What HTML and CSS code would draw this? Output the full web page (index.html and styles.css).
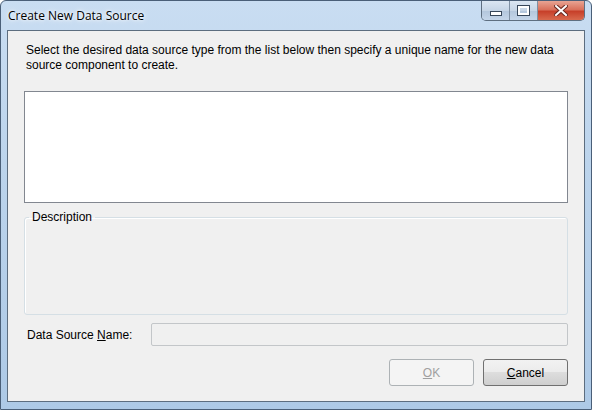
FILE: index.html
```html
<!DOCTYPE html>
<html lang="en">
<head>
    <meta charset="UTF-8">
    <meta name="viewport" content="width=device-width, initial-scale=1.0">
    <title>Create New Data Source</title>
    <link rel="stylesheet" href="styles.css">
</head>
<body>
    <div class="window">
        <div class="titlebar">
            <span class="title">Create New Data Source</span>
            <div class="caption">
                <div class="cap min"><span class="min_icon"></span></div>
                <div class="cap max"><span class="max_icon"></span></div>
                <div class="cap close">
                    <svg width="14" height="11" viewBox="0 0 14 11">
                        <path d="M2 1 L12 10 M12 1 L2 10" stroke="#6b2a22" stroke-width="4" stroke-linecap="square"/>
                        <path d="M2 1 L12 10 M12 1 L2 10" stroke="#ffffff" stroke-width="2" stroke-linecap="square"/>
                    </svg>
                </div>
            </div>
        </div>
        <div class="client">
            <p class="intro">Select the desired data source type from the list below then specify a unique name for the new data source component to create.</p>
            <div class="listbox"></div>
            <fieldset class="group">
                <legend>Description</legend>
            </fieldset>
            <div class="name_row">
                <label>Data Source <u>N</u>ame:</label>
                <input type="text" disabled>
            </div>
            <div class="buttons">
                <button class="btn" disabled><u>O</u>K</button>
                <button class="btn"><u>C</u>ancel</button>
            </div>
        </div>
    </div>
</body>
</html>
```

FILE: styles.css
```css
body {
    margin: 0;
    font-family: "Liberation Sans", Arial, sans-serif;
    font-size: 12px;
}
.window {
    width: 592px;
    height: 410px;
    box-sizing: border-box;
    border: 1px solid #4a5f78;
    border-radius: 6px 6px 0 0;
    background: linear-gradient(180deg, #c9ddf2 0%, #bcd4ec 40%, #adc9e6 100%);
    padding: 0 6px 7px 6px;
    display: flex;
    flex-direction: column;
}
.titlebar {
    height: 29px;
    flex-shrink: 0;
    display: flex;
    justify-content: space-between;
    align-items: flex-start;
}
.title {
    margin: 6px 0 0 1px;
    color: #000;
    font-family: "Open Sans", sans-serif;
    font-size: 12px;
    text-shadow: 0 0 6px #fff, 0 0 3px #fff;
}
.caption {
    display: flex;
    margin-right: 0;
    border: 1px solid #5e6e80;
    border-top: none;
    border-radius: 0 0 5px 5px;
    overflow: hidden;
    height: 19px;
}
.cap {
    display: flex;
    align-items: center;
    justify-content: center;
    background: linear-gradient(180deg, #dbe6f2 0%, #c6d5e6 50%, #b3c6dc 51%, #c5d6ea 100%);
}
.min, .max {
    width: 27px;
    border-right: 1px solid #7f90a3;
}
.close {
    width: 46px;
    background: linear-gradient(180deg, #e8a493 0%, #d9715c 45%, #c7402a 55%, #d86a4e 100%);
}
.min_icon {
    width: 10px;
    height: 3px;
    margin-top: 5px;
    background: #fff;
    border: 1px solid #37475a;
}
.max_icon {
    width: 7px;
    height: 5px;
    border: 2px solid #fff;
    outline: 1px solid #37475a;
}
.client {
    flex: 1;
    min-height: 0;
    background: #f0f0f0;
    border: 1px solid #5c6d7f;
    padding: 12px 16px 0 16px;
    display: flex;
    flex-direction: column;
}
.client > * {
    flex-shrink: 0;
}
.intro {
    margin: 0 0 0 2px;
    line-height: 15px;
    height: 48px;
    color: #000;
}
.listbox {
    height: 110px;
    background: #fff;
    border: 1px solid #828790;
}
.group {
    margin: 7px 0 0 0;
    padding: 0;
    height: 103px;
    border: 1px solid #d5dfe5;
    border-radius: 3px;
    box-shadow: inset 1px 1px 0 #fff;
}
.group legend {
    margin-left: 4px;
    padding: 0 3px 0 3px;
    color: #000;
}
.name_row {
    display: flex;
    align-items: center;
    margin-top: 8px;
}
.name_row label {
    width: 124px;
    padding-left: 3px;
}
.name_row input {
    flex: 1;
    height: 23px;
    box-sizing: border-box;
    border: 1px solid #c3c6c9;
    border-radius: 2px;
    background: #f0f0f0;
    margin: 0;
}
.buttons {
    display: flex;
    justify-content: flex-end;
    gap: 9px;
    margin-top: 13px;
}
.btn {
    width: 85px;
    height: 27px;
    font-family: "Liberation Sans", Arial, sans-serif;
    font-size: 12px;
    border: 1px solid #707070;
    border-radius: 3px;
    background: linear-gradient(180deg, #f2f2f2 0%, #ebebeb 49%, #dddddd 50%, #cfcfcf 100%);
    color: #000;
}
.btn:disabled {
    border-color: #adb2b5;
    background: #f4f4f4;
    color: #a0a0a0;
}
```
